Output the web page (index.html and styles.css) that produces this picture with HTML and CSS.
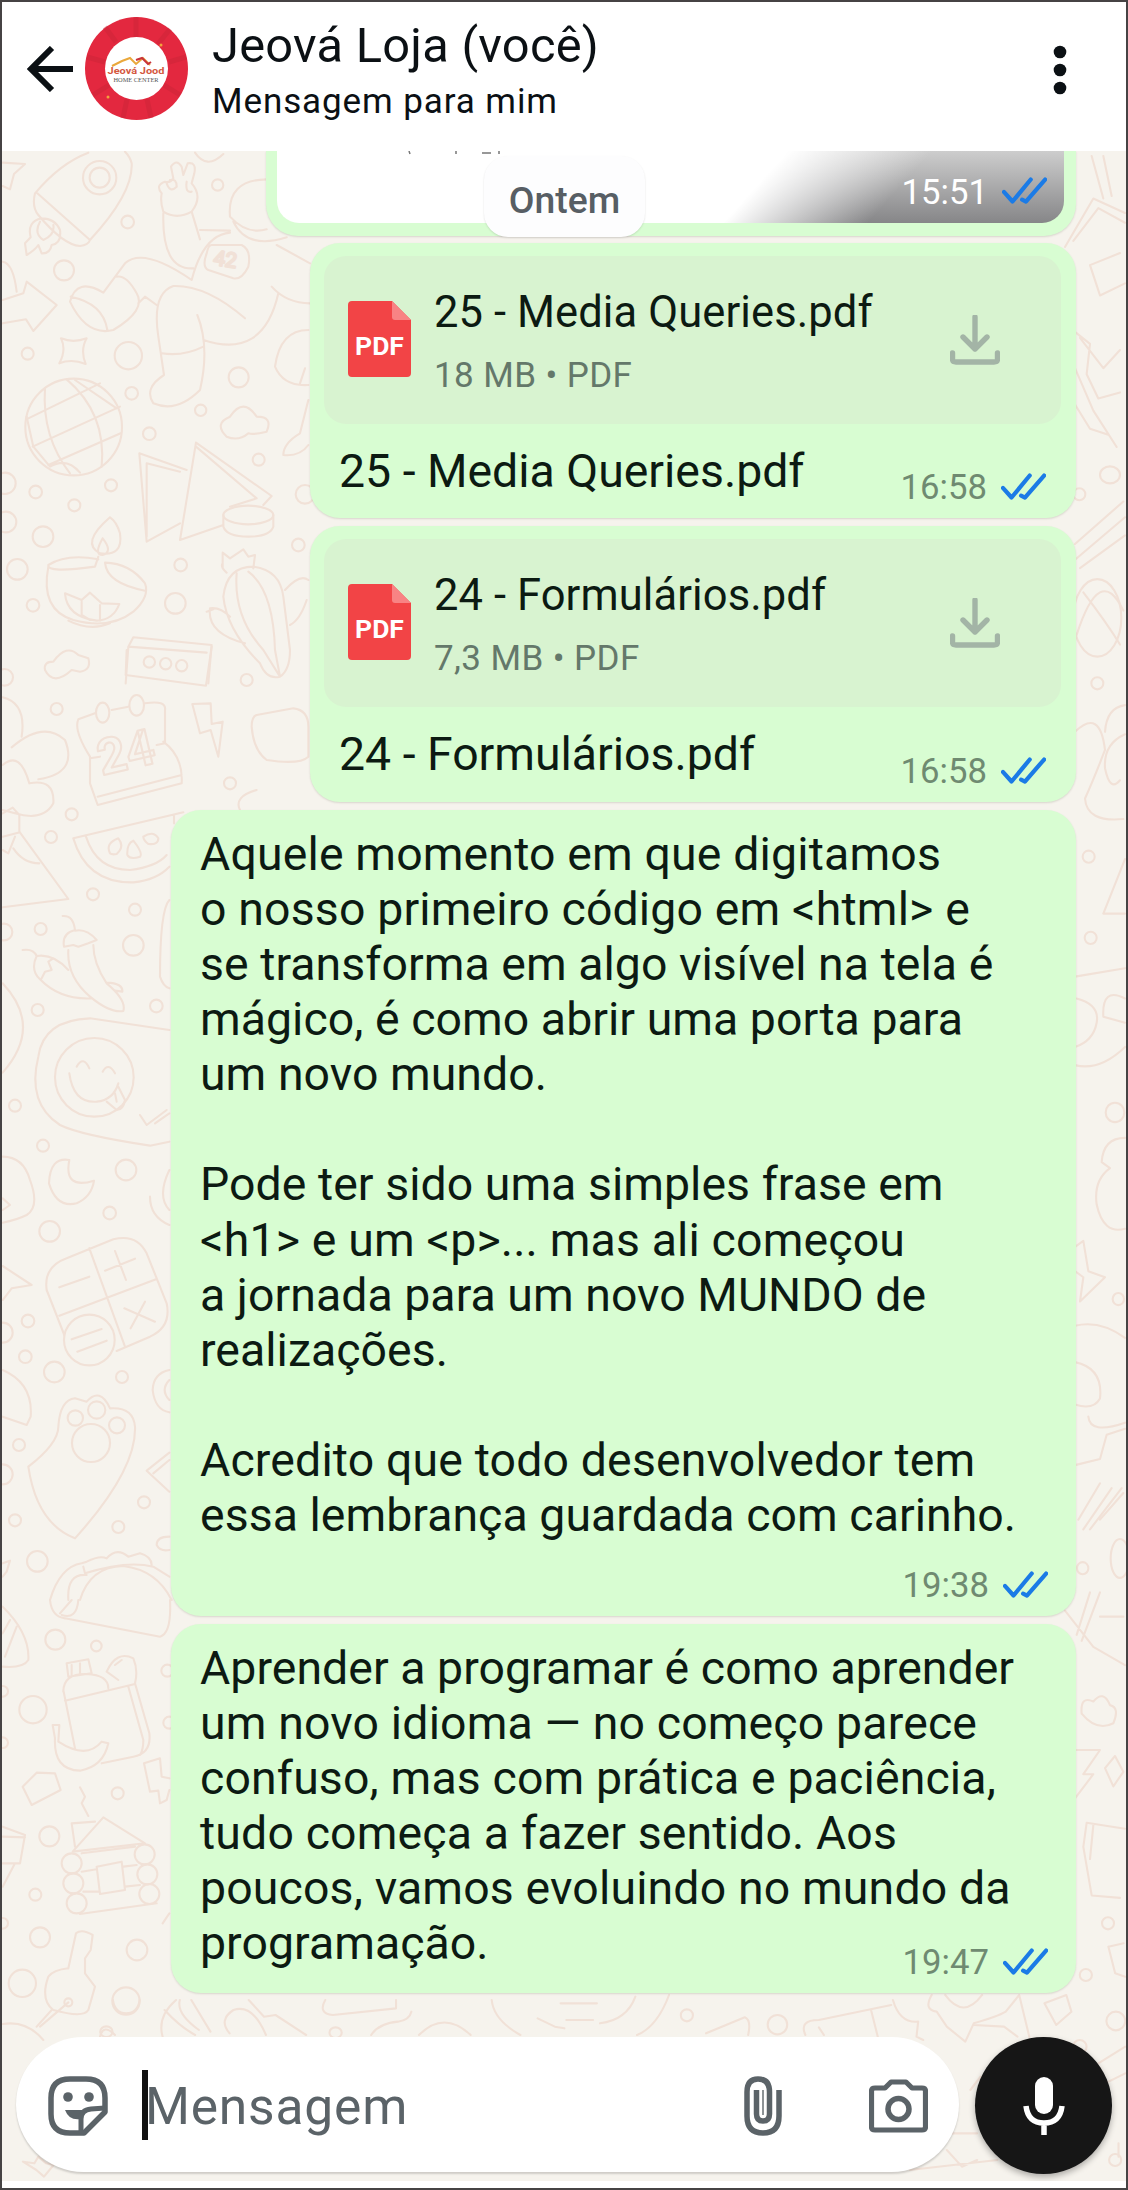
FILE: index.html
```html
<!DOCTYPE html>
<html lang="pt-BR">
<head>
<meta charset="utf-8">
<title>Jeová Loja (você)</title>
<link rel="stylesheet" href="styles.css">
</head>
<body>
<svg class="defs" width="0" height="0" aria-hidden="true">
  <symbol id="checks" viewBox="0 0 47 30">
    <path d="M2 16L11 26L30 3M21 24L25 26L45 3" fill="none" stroke="#1b7be6" stroke-width="4.400" stroke-linecap="round" stroke-linejoin="round"/>
  </symbol>
  <symbol id="download" viewBox="0 0 50 50">
    <path d="M25 2V34M13 22L25 34L37 22M2.500 38V44Q2.500 47 6 47H44Q47.500 47 47.500 44V38" fill="none" stroke="#a3b4a6" stroke-width="5.400" stroke-linecap="round" stroke-linejoin="round"/>
  </symbol>
  <symbol id="sheet" viewBox="0 0 63 76">
    <path d="M4 0H44L63 19V72Q63 76 59 76H4Q0 76 0 72V4Q0 0 4 0Z" fill="#f24446"/>
    <path d="M44 0L63 19H47Q44 19 44 16Z" fill="#f88384"/>
  </symbol>
</svg>
<div class="phone">
  <header class="topbar">
    <svg class="back" viewBox="0 0 46 46"><path d="M46 23H4M25 2L4 23L25 44" fill="none" stroke="#0b1014" stroke-width="6"/></svg>
    <svg class="avatar" viewBox="0 0 103 103">
      <circle cx="51.500" cy="51.500" r="51.500" fill="#e3283f"/>
      <path d="M51 0V20M20 10L31 25M85 12L73 27M2 40L20 45M101 40L84 45M8 78L24 68M95 78L79 68M38 101L42 82M66 101L62 82" stroke="#c92437" stroke-width="5" opacity=".45"/>
      <circle cx="51.500" cy="51.500" r="31.500" fill="#fff"/>
      <path d="M27 49L37 44L45 41L51 47L58 41L65 48" fill="none" stroke="#eaa83b" stroke-width="2"/>
      <path d="M51 43L57 41L63 47L66 45" fill="none" stroke="#c8323a" stroke-width="2"/>
      <text x="51" y="57" text-anchor="middle" textLength="57" lengthAdjust="spacingAndGlyphs" class="logo-name">Jeová Jood</text>
      <text x="51" y="65" text-anchor="middle" textLength="45" lengthAdjust="spacingAndGlyphs" class="logo-sub">HOME CENTER</text>
      <circle cx="76" cy="28" r="1.500" fill="#f2a33c"/><circle cx="23" cy="80" r="1.500" fill="#f2a33c"/>
    </svg>
    <div class="who">
      <h1>Jeová Loja (você)</h1>
      <p>Mensagem para mim</p>
    </div>
    <svg class="more" viewBox="0 0 14 50"><circle cx="7" cy="7" r="6.300"/><circle cx="7" cy="25" r="6.300"/><circle cx="7" cy="43" r="6.300"/></svg>
  </header>

  <main class="chat">
    <svg class="wallpaper" viewBox="0 0 1128 2190" aria-hidden="true">
      <g transform="translate(0 150) scale(.33333)">
        <path d="M265 8Q180 40 105 130Q95 170 115 195Q190 285 240 288Q265 285 270 270Q400 130 395 40Q390 20 375 5M112 130L270 270M125 205Q80 215 92 262L75 280L80 315Q105 300 115 285L125 310Q150 312 155 285Q185 280 180 240Q165 205 125 205M120 215Q100 250 130 270Q165 255 160 225M8 38L75 42L42 72L30 118L8 108"/>
        <circle cx="299" cy="83" r="50"/><circle cx="299" cy="83" r="30"/><circle cx="383" cy="216" r="19"/><circle cx="653" cy="105" r="17"/><circle cx="192" cy="361" r="30"/><circle cx="83" cy="611" r="18"/><circle cx="385" cy="617" r="41"/><circle cx="716" cy="682" r="30"/><circle cx="395" cy="730" r="19"/><circle cx="602" cy="781" r="17"/><circle cx="448" cy="851" r="19"/><circle cx="776" cy="929" r="18"/>
        <path d="M485 130Q465 105 495 95Q510 100 520 85L513 50Q530 25 545 50L550 75L563 40Q590 35 583 70L575 100Q610 140 575 185Q530 210 490 185Q480 155 485 130M500 100Q510 130 530 110Q530 85 510 90M560 95Q555 130 575 125M490 190Q485 360 580 355M575 185L600 268M600 240L690 242M690 200Q680 90 800 88M690 200Q740 255 800 238M700 215Q740 300 860 262M690 248Q610 255 575 390Q430 290 375 340L310 428Q230 380 210 455Q260 560 340 540Q440 480 410 430Q380 375 350 380M212 440Q310 460 322 540M415 460L435 440L470 465M735 505Q620 405 520 408Q455 430 475 560L492 675Q430 715 460 760Q530 790 600 720Q630 590 592 495M485 610Q550 620 610 590M610 570Q790 630 835 430M815 410Q860 460 930 460M830 285L930 340M635 285H725Q755 300 745 350Q725 390 700 385L625 360Q605 350 620 310Q625 285 635 285M585 8Q620 60 670 12"/>
        <text x="640" y="350" font-size="62" transform="rotate(9 680 335)">42</text>
        <path d="M8 335Q40 340 50 425M8 450L70 430L80 395L170 465L100 543L78 508L8 520M183 565Q220 580 260 565Q240 600 257 642Q215 625 178 640Q200 600 183 565M925 540Q840 540 825 650Q850 710 925 705M900 700L915 655M925 750L900 850Q850 880 850 915Q900 920 925 885M680 860Q640 820 690 800Q730 740 770 800Q820 800 800 845Q760 855 745 850Q715 875 680 860"/>
        <circle cx="221" cy="831" r="145"/><path d="M135 715Q125 860 210 970M200 688Q320 790 305 950M85 805L300 700M98 890L360 770M145 945L362 850M225 690L350 775M80 800L100 890L150 950Q200 920 240 968"/>
        <path d="M440 1175L418 910L560 960M440 1175L540 1120M440 1160L440 940L540 965M588 878L540 1170L670 1125M588 878L815 1038L790 1065M588 890L770 1045L690 1070"/>
        <ellipse cx="745" cy="1095" rx="75" ry="28"/><path d="M670 1095V1130Q680 1160 745 1160Q810 1160 820 1130V1095"/>
        <circle cx="333" cy="1006" r="18"/><circle cx="107" cy="1026" r="19"/><circle cx="223" cy="1066" r="18"/><circle cx="15" cy="1000" r="32"/><circle cx="18" cy="1116" r="31"/><circle cx="129" cy="1160" r="31"/><circle cx="52" cy="1258" r="31"/><circle cx="99" cy="1366" r="19"/><circle cx="542" cy="1245" r="19"/><circle cx="526" cy="1360" r="31"/><circle cx="895" cy="1185" r="19"/><circle cx="915" cy="1033" r="28"/>
        <path d="M330 1102Q240 1180 300 1210Q370 1220 360 1150Q350 1115 330 1102M308 1165Q280 1215 308 1215Q340 1205 308 1165M295 1220L285 1250Q140 1270 145 1245Q200 1210 295 1228M145 1250Q120 1380 220 1410Q330 1440 400 1385Q450 1340 435 1300Q390 1240 315 1238Q320 1300 435 1322M195 1330L245 1350L270 1328L305 1360L358 1362Q340 1410 290 1412Q200 1400 195 1330M245 1355V1395L270 1410M300 1365V1412M205 1412Q270 1445 330 1420"/>
        <path d="M668 1255V1208L690 1225L730 1198L745 1220L765 1215L760 1255M680 1268Q660 1250 668 1240M670 1340Q680 1250 760 1250Q840 1260 850 1340L870 1500Q870 1560 840 1580Q800 1590 780 1540M670 1340Q680 1440 780 1540M710 1270Q700 1400 790 1500L840 1580M745 1265Q820 1320 825 1500L840 1580M855 1320Q900 1270 925 1290M870 1425Q900 1410 920 1350M735 1480Q620 1450 630 1375Q660 1370 690 1400M620 1385L640 1378M377 1600L385 1490L400 1462L635 1485L625 1600M385 1490L620 1508"/>
      </g>
      <g transform="translate(0 650) scale(.33333)">
        <path d="M135 60Q130 35 160 35Q200 -20 235 15L265 25Q275 60 240 65L215 60Q160 110 135 60M380 0L377 75L618 107L635 -10"/>
        <circle cx="448" cy="36" r="17"/><circle cx="497" cy="41" r="17"/><circle cx="545" cy="47" r="17"/><circle cx="170" cy="177" r="18"/><circle cx="14" cy="82" r="25"/><circle cx="215" cy="493" r="18"/><circle cx="153" cy="561" r="18"/><circle cx="279" cy="733" r="18"/><circle cx="405" cy="779" r="18"/><circle cx="122" cy="837" r="18"/><circle cx="12" cy="846" r="25"/><circle cx="400" cy="886" r="31"/><circle cx="469" cy="1068" r="19"/><circle cx="113" cy="1080" r="18"/><circle cx="45" cy="1367" r="18"/><circle cx="129" cy="1487" r="18"/><circle cx="740" cy="90" r="18"/><circle cx="690" cy="400" r="18"/>
        <path d="M8 142Q80 160 65 260M35 292Q130 210 195 270Q235 370 115 388M8 345Q60 300 88 400M88 400Q165 385 160 460Q130 515 45 490L8 480M8 490L38 473L58 495V545L205 747L8 772M8 560L60 547M40 595Q70 640 118 640M8 600L25 610L45 560"/>
        <path d="M285 190L235 208Q220 240 270 320V400L293 465L545 400Q550 320 490 275M335 180L385 170M435 160Q500 150 495 180V280L470 285M270 325L300 320M293 440L545 375"/><ellipse cx="308" cy="188" rx="20" ry="30"/><ellipse cx="410" cy="166" rx="22" ry="31"/>
        <text x="290" y="360" font-size="150" transform="rotate(-13 370 300)" class="bold">24</text>
        <path d="M550 487L220 565Q260 700 400 697Q470 690 508 650M258 560Q290 660 390 660Q470 650 500 615M522 495V520M330 610Q315 580 355 565Q375 590 350 612Q335 615 330 610M382 615Q380 580 400 572Q430 610 420 620Q390 630 382 615M430 560Q460 540 475 565Q475 585 445 582Q430 570 430 560M577 162L600 250L632 240L655 320L668 215L635 222L632 160ZM770 195L880 175Q925 180 925 230V320Q900 345 800 330Q760 300 755 230Q755 200 770 195M770 420Q700 440 720 480"/>
        <path d="M188 798Q220 795 225 840Q185 850 192 890L220 885L235 890L265 880L290 870Q260 835 225 842M205 900Q200 980 270 1040Q330 1090 370 1083Q380 1050 320 1000Q280 940 280 885M68 900Q100 895 110 918Q160 910 205 960M110 918Q90 960 120 988Q180 1050 275 1045M125 985L135 965L155 960L145 935L160 925M320 998Q370 1000 367 1025L345 1022M508 750Q480 780 480 980Q490 1010 508 1015M8 1000Q130 1130 8 1268"/>
        <circle cx="283" cy="1282" r="118"/><path d="M508 1140L270 1105Q130 1110 115 1220Q80 1360 180 1425Q240 1455 450 1487L508 1475M208 1270Q220 1360 290 1355Q340 1350 355 1300M230 1250Q250 1215 268 1255M308 1265Q325 1235 345 1270M320 1355L350 1380Q370 1380 375 1350L355 1310M345 1330L350 1355M420 1395L440 1425L500 1380M465 1420L508 1390"/>
      </g>
      <g transform="translate(0 1150) scale(.33333)">
        <path d="M8 20Q70 20 90 90Q120 170 80 195Q50 210 8 218M8 145L30 165L8 180M208 30Q150 20 147 100Q170 175 230 160Q275 140 282 92Q190 120 208 30M508 60Q470 140 508 180M450 140Q450 200 508 225M8 348L95 405L35 415L8 450"/>
        <circle cx="378" cy="60" r="31"/><circle cx="329" cy="189" r="19"/><circle cx="149" cy="244" r="31"/><circle cx="84" cy="513" r="19"/><circle cx="8" cy="548" r="30"/><circle cx="76" cy="620" r="19"/><circle cx="163" cy="666" r="31"/><circle cx="366" cy="681" r="18"/><circle cx="57" cy="885" r="18"/><circle cx="8" cy="973" r="30"/><circle cx="45" cy="1111" r="18"/><circle cx="432" cy="1057" r="18"/><circle cx="355" cy="1131" r="18"/><circle cx="112" cy="1234" r="31"/><circle cx="268" cy="570" r="76"/><circle cx="273" cy="879" r="57"/><circle cx="226" cy="804" r="23"/><circle cx="290" cy="780" r="26"/><circle cx="351" cy="826" r="24"/>
        <path d="M193 555L140 420Q130 350 200 325L340 268Q410 250 440 310L500 460Q515 530 450 560L350 603M268 295L375 590M178 497L468 388M178 412L268 380M315 362L405 326M345 303L378 390M373 475L465 515M435 455L392 535M215 568L305 537M232 605L320 572"/>
        <path d="M175 830Q180 750 225 745L260 755Q300 710 330 775Q400 770 405 830Q410 960 225 1165Q110 1120 85 950Q175 880 175 830M8 660Q100 700 92 800L80 825L8 800M508 660Q460 670 458 720Q465 780 508 787M508 690Q480 720 508 750M508 908L440 962L508 1025M460 970L508 930M508 1160Q470 1160 470 1185Q480 1205 508 1200M8 1240L30 1232L20 1265L8 1280M150 1350Q180 1250 245 1240L260 1235Q300 1215 320 1225Q350 1190 385 1220L420 1210Q455 1220 455 1245M250 1250L255 1270Q380 1230 460 1250L508 1280M240 1350Q270 1250 370 1248Q470 1260 515 1350M205 1350Q200 1270 260 1275"/>
      </g>
      <g transform="translate(0 1600) scale(.33333)">
        <path d="M150 0Q155 50 195 55L480 110Q515 100 510 0M180 40L215 0M185 45Q230 60 235 0M8 20Q90 100 85 180Q70 205 8 200M8 100L30 60M15 170L50 80M200 190L265 178L275 220L205 230ZM215 195V225M240 190V220M190 275Q190 220 260 222Q325 225 325 265M195 302L405 252M190 270L225 445M405 250L448 400Q455 460 400 470L305 490M385 260L430 420Q430 450 420 465M320 215Q350 150 400 175Q415 210 405 250M320 215L355 240M345 195L365 180M158 375L165 415Q160 510 240 512Q310 500 325 430L305 425Q260 480 175 425L178 375Z"/>
        <circle cx="166" cy="119" r="30"/><circle cx="289" cy="138" r="16"/><circle cx="99" cy="329" r="41"/><circle cx="353" cy="580" r="18"/><circle cx="148" cy="709" r="30"/><circle cx="106" cy="884" r="18"/><circle cx="120" cy="1012" r="30"/><circle cx="411" cy="1050" r="31"/><circle cx="67" cy="1150" r="41"/><circle cx="378" cy="1203" r="41"/><circle cx="215" cy="790" r="30"/><circle cx="220" cy="850" r="30"/><circle cx="230" cy="910" r="30"/><circle cx="434" cy="763" r="30"/><circle cx="442" cy="823" r="30"/><circle cx="448" cy="882" r="30"/><circle cx="205" cy="1207" r="12"/><circle cx="502" cy="212" r="18"/><circle cx="508" cy="368" r="18"/><circle cx="8" cy="274" r="16"/><circle cx="8" cy="428" r="16"/><circle cx="8" cy="970" r="16"/>
        <path d="M68 560L110 518L165 520L182 570L95 615ZM240 562L255 590L245 610L265 648M432 490L480 475L485 530L508 535M432 490L450 575L475 572L480 610L500 600L508 570M218 755L310 652L435 730ZM225 740L215 670L285 665M290 800L365 785L375 870L300 882ZM245 760L405 740M245 815L290 808M250 875L295 875M370 800L410 795M375 860L420 855M240 942L470 910M8 680L75 705L60 790L8 790M8 710L75 712M45 790L8 860M488 970L508 940M205 1105L228 1000Q245 985 278 1005L272 1050L255 1075L255 1120L285 1160L265 1230Q250 1255 160 1230Q120 1200 145 1130Q160 1110 205 1105M205 1207L120 1280M155 1230L110 1280M8 1272Q80 1260 130 1320M300 1310Q310 1270 345 1305"/>
      </g>
      <g transform="translate(0 2000) scale(.38265 .33333)">
        <path d="M295 0Q300 40 330 40Q360 40 365 0M425 110Q410 50 460 0M470 0Q460 40 520 90M500 0L550 95M430 30Q470 80 510 105M600 100Q570 60 610 30Q660 10 695 105M650 0L690 50L720 45L800 105M850 0Q830 40 870 45L1035 25V0M970 105Q990 70 1040 65Q1070 60 1075 35M1095 105Q1160 30 1230 105M1285 0Q1290 60 1360 105M1405 55L1450 80L1475 85M1465 10L1560 10M1480 60H1550M60 485L90 490L100 470L120 490L140 495L115 530L95 510Z"/>
        <circle cx="877" cy="98" r="16"/><circle cx="278" cy="95" r="16"/>
      </g>
      <g transform="translate(600 1940) scale(.3367 .33333)">
        <path d="M0 250Q80 240 105 170M205 165Q170 260 110 285M315 280L430 232Q450 240 440 285M610 285Q590 240 650 240L865 195M805 210L825 290M650 262L665 285M870 180Q890 250 945 245L940 290L960 300M985 165Q960 210 1000 215L1030 260L1085 305L1110 250Q1180 230 1205 215L1245 165L1275 290M1025 165Q1080 240 1135 165M1110 255L1200 260L1240 290M1320 190L1385 165L1400 215L1355 255ZM1510 20L1555 10M1510 20L1530 100L1560 110M1480 370L1560 320M1500 430L1560 400M1030 630L1075 680L1120 660M920 690L1180 660M1100 450L1130 410V560M1040 580H1120M1540 610V650"/>
        <circle cx="258" cy="226" r="18"/><circle cx="527" cy="254" r="29"/><circle cx="1443" cy="105" r="18"/><circle cx="1532" cy="243" r="28"/><circle cx="1530" cy="660" r="18"/><circle cx="1425" cy="320" r="20"/>
      </g>
      <g transform="translate(1040 150) scale(.33333 1.2121)">
        <path d="M155 5L190 40M190 5L215 38M75 80L160 40L255 52M100 75L175 48L255 60M150 95L240 85M150 95L180 120L255 110M105 150L150 160L140 185L175 205L240 200M105 180L160 215L230 245M120 155L190 180L240 165M105 210L150 230L205 235M105 325L250 290M105 338L255 303M120 345L255 318M105 480Q180 460 195 495Q160 520 135 535Q140 555 250 552M195 480Q200 460 255 458M255 482Q190 490 195 510Q210 530 240 520M190 630L255 585M190 630H255M105 682L255 675M110 700Q180 705 170 720Q160 735 105 740M105 755Q180 760 255 740M190 715Q185 690 255 700M190 715L255 720M255 815Q190 815 185 835L210 840Q160 850 170 870Q190 895 255 890M105 905L130 900L145 925L195 930L120 950L130 930L105 925M105 970Q180 965 255 980M105 1000Q190 1005 180 1030Q160 1040 105 1035M145 1045Q150 1060 255 1050M105 1085L180 1080L200 1060L255 1055M115 1130L180 1100M130 1138L215 1104M150 1138L245 1104M180 1130L250 1108M75 1205L160 1235L255 1250M110 1225L150 1190M125 1230L180 1190M180 1210H250M125 1290Q120 1275 160 1280Q190 1270 210 1283Q240 1285 220 1298Q170 1305 125 1290M105 1320H180L130 1340H160L105 1360M195 1335L225 1325L250 1338L220 1350ZM140 1380L255 1385M140 1380L130 1400L155 1440L240 1442M160 1382L150 1410"/>
        <ellipse cx="210" cy="268" rx="30" ry="7"/><ellipse cx="118" cy="284" rx="18" ry="5"/><ellipse cx="172" cy="386" rx="72" ry="32"/><path d="M110 400Q180 340 250 380M130 365Q200 390 240 408"/><ellipse cx="172" cy="440" rx="18" ry="5"/><ellipse cx="146" cy="583" rx="18" ry="5"/><ellipse cx="152" cy="650" rx="18" ry="5"/><ellipse cx="225" cy="794" rx="28" ry="8"/><ellipse cx="235" cy="948" rx="17" ry="5"/><ellipse cx="128" cy="1170" rx="17" ry="5"/><ellipse cx="240" cy="1162" rx="28" ry="16"/><ellipse cx="204" cy="1463" rx="18" ry="5"/>
      </g>
    </svg>

    <section class="bubble photo">
      <div class="picture">
        <svg class="crumbs" viewBox="0 0 100 4"><path d="M2 0L3 3M49 0V3M75 2H84M92 0V3" stroke="#777" stroke-width="1.500" fill="none"/></svg>
        <span class="time">15:51</span><svg class="tick"><use href="#checks"/></svg>
      </div>
    </section>

    <section class="bubble doc first">
      <div class="file">
        <div class="pdf"><svg><use href="#sheet"/></svg><b>PDF</b></div>
        <div class="info"><h2>25 - Media Queries.pdf</h2><p>18 MB • PDF</p></div>
        <svg class="download"><use href="#download"/></svg>
      </div>
      <p class="caption">25 - Media Queries.pdf</p>
      <div class="meta"><span class="time">16:58</span><svg class="tick"><use href="#checks"/></svg></div>
    </section>

    <section class="bubble doc second">
      <div class="file">
        <div class="pdf"><svg><use href="#sheet"/></svg><b>PDF</b></div>
        <div class="info"><h2>24 - Formulários.pdf</h2><p>7,3 MB • PDF</p></div>
        <svg class="download"><use href="#download"/></svg>
      </div>
      <p class="caption">24 - Formulários.pdf</p>
      <div class="meta"><span class="time">16:58</span><svg class="tick"><use href="#checks"/></svg></div>
    </section>

    <section class="bubble note long">
      <div class="text">
        <p>
          <span class="wide">Aquele momento em que digitamos</span>
          <span class="wide">o nosso primeiro código em &lt;html&gt; e</span>
          <span>se transforma em algo visível na tela é</span>
          <span>mágico, é como abrir uma porta para</span>
          <span>um novo mundo.</span>
        </p>
        <p>
          <span>Pode ter sido uma simples frase em</span>
          <span class="wide">&lt;h1&gt; e um &lt;p&gt;... mas ali começou</span>
          <span>a jornada para um novo MUNDO de</span>
          <span>realizações.</span>
        </p>
        <p>
          <span class="wide">Acredito que todo desenvolvedor tem</span>
          <span>essa lembrança guardada com carinho.</span>
        </p>
      </div>
      <div class="meta"><span class="time">19:38</span><svg class="tick"><use href="#checks"/></svg></div>
    </section>

    <section class="bubble note short">
      <div class="text">
        <p>
          <span>Aprender a programar é como aprender</span>
          <span class="wide">um novo idioma — no começo parece</span>
          <span class="wide">confuso, mas com prática e paciência,</span>
          <span class="wide">tudo começa a fazer sentido. Aos</span>
          <span class="wide">poucos, vamos evoluindo no mundo da</span>
          <span>programação.</span>
        </p>
      </div>
      <div class="meta"><span class="time">19:47</span><svg class="tick"><use href="#checks"/></svg></div>
    </section>

    <div class="day">Ontem</div>

    <footer class="composer">
      <div class="field">
        <svg class="sticker" viewBox="0 0 60 60"><path d="M22 3H38Q57 3 57 22V36L36 57H22Q3 57 3 38V22Q3 3 22 3Z" fill="none" stroke="#5b6368" stroke-width="5.500" stroke-linejoin="round"/><circle cx="20" cy="21" r="4.800" fill="#5b6368"/><circle cx="41" cy="21" r="4.800" fill="#5b6368"/><path d="M17 34H37L33 38V43Q21 45 17 34Z" fill="#5b6368"/><path d="M33 56V43Q33 34 43 33L57 32" fill="none" stroke="#5b6368" stroke-width="5"/></svg>
        <i class="caret"></i><span class="placeholder">Mensagem</span>
        <svg class="clip" viewBox="0 0 38 60"><path d="M35 14V40Q35 57 19 57Q3 57 3 40V16Q3 3 14 3Q25.500 3 25.500 16V38Q25.500 45 19 45Q12.500 45 12.500 38V14" fill="none" stroke="#5b6368" stroke-width="5.500"/><path d="M19 14V39" stroke="#8d9396" stroke-width="2"/></svg>
        <svg class="camera" viewBox="0 0 59 54"><path d="M6 9H16L22 3H37L43 9H53Q56.500 9 56.500 12V48Q56.500 51 53 51H6Q2.500 51 2.500 48V12Q2.500 9 6 9Z" fill="none" stroke="#5b6368" stroke-width="5.200" stroke-linejoin="round"/><circle cx="29.500" cy="30" r="10.500" fill="none" stroke="#5b6368" stroke-width="5.500"/></svg>
      </div>
      <button class="mic" aria-label="Gravar"><svg viewBox="0 0 42 58"><rect x="12" y="0" width="18" height="37" rx="9" fill="#fff"/><path d="M3 29Q5 46 21 46Q37 46 39 29M21 46V58" fill="none" stroke="#fff" stroke-width="5.500"/></svg></button>
    </footer>
  </main>
</div>
</body>
</html>
```
FILE: styles.css
```css
* { box-sizing: border-box; margin: 0; padding: 0; }
body { font-family: Roboto, "Noto Sans", sans-serif; background: #fff; color: #0c1a12; }
.defs { position: absolute; }
.phone {
  width: 1128px; height: 2190px; border: 2px solid #464344;
  display: flex; flex-direction: column; background: #fff; overflow: hidden; padding-bottom: 7px;
}

.topbar { flex: none; height: 149px; padding: 0 59px 0 25px; display: flex; color: #0b1014; }
.back { width: 46px; height: 46px; margin-top: 44px; }
.avatar { width: 103px; height: 103px; margin: 15px 24px 0 12px; }
.logo-name { font: bold 9px Roboto, sans-serif; fill: #d4583f; }
.logo-sub { font: 6px "Liberation Serif", serif; fill: #555; }
.who { flex: 1; padding-top: 14px; white-space: nowrap; }
.who h1 { font-size: 48.8px; font-weight: 400; line-height: 60px; letter-spacing: .25px; }
.who p { font-size: 35px; line-height: 46px; margin-top: 3px; letter-spacing: .9px; }
.more { width: 14px; height: 50px; margin-top: 43px; fill: #0b1014; }

.chat {
  position: relative; flex: 1; overflow: hidden; background: #f6f3ed;
  display: flex; flex-direction: column; align-items: flex-end; gap: 8px; padding-right: 50px;
}
.wallpaper {
  position: absolute; left: -2px; top: -151px; width: 1128px; height: 2190px;
  fill: none; stroke: #f1e1d7; stroke-width: 2.1px; stroke-linejoin: round; stroke-linecap: round;
}
.wallpaper path, .wallpaper circle, .wallpaper ellipse, .wallpaper text { vector-effect: non-scaling-stroke; }
.wallpaper .bold { font-weight: 700; }

.bubble { position: relative; flex: none; background: #d8fdd2; border-radius: 30px; box-shadow: 0 1px 2px rgba(60, 60, 40, .16); white-space: nowrap; }
.photo { width: 810px; height: 85px; margin-bottom: -1px; border-radius: 0 0 32px 32px; padding: 0 12px 13px 11px; }
.picture {
  height: 72px; border-radius: 0 0 22px 22px; display: flex; align-items: flex-start; justify-content: flex-end;
  gap: 14px; padding: 21px 17px 0 0; color: #fff; overflow: hidden;
  background: linear-gradient(132deg, #fff 60%, rgba(255, 255, 255, 0) 77%), linear-gradient(#cdcdcd, #868688);
}
.crumbs { width: 100px; height: 4px; margin: -21px auto 0 130px; }
.time { font-size: 34.7px; line-height: 40px; }
.tick { width: 45px; height: 30px; }
.meta { display: flex; gap: 14px; align-items: center; color: #6f8a71; align-self: end; justify-self: end; }
.photo .tick { margin-top: 4px; }

.doc { width: 766px; padding: 13px 15px 0 14px; display: grid; grid-template-rows: 168px 1fr; }
.first { height: 275px; }
.second { height: 276px; }
.file { background: #d8f3d0; border-radius: 22px; display: flex; padding-left: 24px; }
.pdf { width: 63px; height: 76px; margin-top: 45px; display: grid; place-items: center; }
.pdf svg { width: 63px; height: 76px; grid-area: 1 / 1; }
.pdf b { grid-area: 1 / 1; position: relative; font-size: 26.5px; line-height: 30px; padding-top: 14px; color: #fff; }
.info { flex: 1; padding: 31px 0 0 23px; }
.info h2 { font-size: 43.5px; font-weight: 400; line-height: 52px; letter-spacing: .1px; }
.info p { font-size: 35px; line-height: 40px; margin-top: 17px; letter-spacing: .4px; color: #64786a; }
.download { width: 50px; height: 50px; margin: 59px 61px 0 0; }
.caption { grid-area: 2 / 1; justify-self: start; font-size: 46.4px; line-height: 56px; padding: 19px 0 0 15px; }
.doc .meta { grid-area: 2 / 1; padding: 0 15px 11px 0; }

.note { width: 905px; padding: 16.500px 28px 11px 29px; display: grid; }
.long { height: 806px; }
.short { height: 369px; }
.text { grid-area: 1 / 1; display: flex; flex-direction: column; gap: 55.1px; font-size: 46.4px; line-height: 55.15px; }
.text span { display: block; width: fit-content; letter-spacing: .05px; }
.text .wide { letter-spacing: .16px; }
.note .meta { grid-area: 1 / 1; }

.day {
  position: absolute; left: 482px; top: 5px; width: 161px; height: 81px; padding-top: 22px;
  background: #fdfdfe; border-radius: 24px; box-shadow: 0 1px 2px rgba(0, 0, 0, .12);
  color: #575e64; font-size: 37.3px; font-weight: 500; line-height: 44px; text-align: center;
}

.composer { position: relative; align-self: stretch; display: flex; gap: 16px; margin: 36px -36px 0 14px; }
.field {
  width: 945px; height: 135px; border-radius: 68px; background: #fff; box-shadow: 0 2px 2px rgba(0, 0, 0, .16);
  display: flex; align-items: center; padding: 3px 31px 0 32px;
}
.sticker { width: 60px; height: 60px; }
.caret { width: 6px; height: 70px; margin-left: 34px; margin-top: -2px; background: #111; }
.placeholder { flex: 1; font-size: 51.5px; line-height: 60px; letter-spacing: .8px; color: #5b6368; margin: 2px 0 0 -3px; }
.clip { width: 38px; height: 60px; margin-right: 87px; }
.camera { width: 59px; height: 54px; }
.mic {
  width: 137px; height: 137px; border: 0; border-radius: 50%; background: #161616; box-shadow: 0 3px 6px rgba(0, 0, 0, .3);
  display: flex; justify-content: center; align-items: center;
}
.mic svg { width: 42px; height: 58px; }
```
